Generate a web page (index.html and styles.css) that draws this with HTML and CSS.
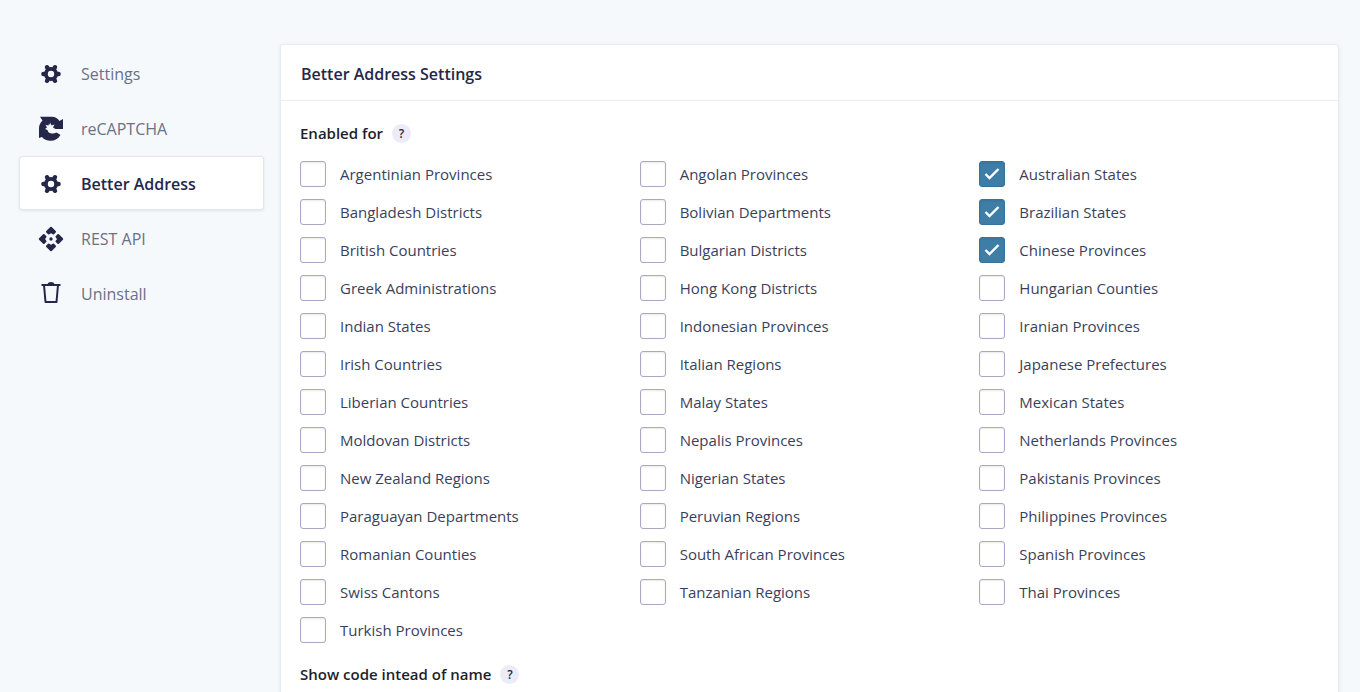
FILE: index.html
```
<!DOCTYPE html>
<html lang="en">
<head>
    <meta charset="UTF-8">
    <meta name="viewport" content="width=device-width, initial-scale=1.0">
    <title>Better Address Settings</title>
    <link rel="stylesheet" href="styles.css">
</head>
<body>
    <div class="page">
        <nav class="sidebar">
            <a href="#settings">
                <svg class="icon" viewBox="0 0 26 26"><use href="#gear" /></svg>
                <span>Settings</span>
            </a>
            <a href="#recaptcha">
                <svg class="icon" viewBox="0 0 26 26">
                    <path fill="currentColor" d="M2 0.800H14Q19 1 21.500 5L25 3V13H14V16H18L22.500 19Q19 24.800 12.500 24.800Q7 24.800 4 21L1 22V12Q1 8 4.500 4.500Z" />
                    <path fill="#f6f9fc" d="M12.500 6.500L13.500 9.500L16.500 8.500L15 11.500L17.500 13H25V16.500H18.500Q16.500 17.800 13.500 17.500Q10 17 9.500 14L7 13L9 11.500L7.500 9L10.500 9.500L11 7.500L12 9Z" />
                </svg>
                <span>reCAPTCHA</span>
            </a>
            <a href="#address" class="active">
                <svg class="icon" viewBox="0 0 26 26"><use href="#gear" /></svg>
                <span>Better Address</span>
            </a>
            <a href="#rest">
                <svg class="icon" viewBox="0 0 26 26">
                    <g fill="currentColor">
                        <path id="api-arrow" d="M13 1.800L17 5.800L15.300 7.500L13 5.900L10.700 7.500L9 5.800Z" stroke="currentColor" stroke-width="2" stroke-linejoin="round" />
                        <use href="#api-arrow" transform="rotate(90 13 13)" />
                        <use href="#api-arrow" transform="rotate(180 13 13)" />
                        <use href="#api-arrow" transform="rotate(270 13 13)" />
                        <circle cx="13" cy="13" r="1.700" />
                    </g>
                </svg>
                <span>REST API</span>
            </a>
            <a href="#uninstall">
                <svg class="icon" viewBox="0 0 26 26">
                    <path fill="none" stroke="currentColor" stroke-width="2" stroke-linejoin="round" d="M3.500 4H22.500M6 4L7.500 21H18.500L20 4" />
                    <path fill="currentColor" d="M9.500 3Q10 1 13 1Q16 1 16.500 3V4H9.500Z" />
                </svg>
                <span>Uninstall</span>
            </a>
        </nav>

        <main class="card">
            <h1>Better Address Settings</h1>
            <form class="fields">
                <h2>Enabled for <button type="button" class="help" aria-label="Help for enabled states">?</button></h2>
                <div class="choices">
                    <label><input type="checkbox"> Argentinian Provinces</label>
                    <label><input type="checkbox"> Angolan Provinces</label>
                    <label><input type="checkbox" checked> Australian States</label>
                    <label><input type="checkbox"> Bangladesh Districts</label>
                    <label><input type="checkbox"> Bolivian Departments</label>
                    <label><input type="checkbox" checked> Brazilian States</label>
                    <label><input type="checkbox"> British Countries</label>
                    <label><input type="checkbox"> Bulgarian Districts</label>
                    <label><input type="checkbox" checked> Chinese Provinces</label>
                    <label><input type="checkbox"> Greek Administrations</label>
                    <label><input type="checkbox"> Hong Kong Districts</label>
                    <label><input type="checkbox"> Hungarian Counties</label>
                    <label><input type="checkbox"> Indian States</label>
                    <label><input type="checkbox"> Indonesian Provinces</label>
                    <label><input type="checkbox"> Iranian Provinces</label>
                    <label><input type="checkbox"> Irish Countries</label>
                    <label><input type="checkbox"> Italian Regions</label>
                    <label><input type="checkbox"> Japanese Prefectures</label>
                    <label><input type="checkbox"> Liberian Countries</label>
                    <label><input type="checkbox"> Malay States</label>
                    <label><input type="checkbox"> Mexican States</label>
                    <label><input type="checkbox"> Moldovan Districts</label>
                    <label><input type="checkbox"> Nepalis Provinces</label>
                    <label><input type="checkbox"> Netherlands Provinces</label>
                    <label><input type="checkbox"> New Zealand Regions</label>
                    <label><input type="checkbox"> Nigerian States</label>
                    <label><input type="checkbox"> Pakistanis Provinces</label>
                    <label><input type="checkbox"> Paraguayan Departments</label>
                    <label><input type="checkbox"> Peruvian Regions</label>
                    <label><input type="checkbox"> Philippines Provinces</label>
                    <label><input type="checkbox"> Romanian Counties</label>
                    <label><input type="checkbox"> South African Provinces</label>
                    <label><input type="checkbox"> Spanish Provinces</label>
                    <label><input type="checkbox"> Swiss Cantons</label>
                    <label><input type="checkbox"> Tanzanian Regions</label>
                    <label><input type="checkbox"> Thai Provinces</label>
                    <label><input type="checkbox"> Turkish Provinces</label>
                </div>
                <h2>Show code intead of name <button type="button" class="help" aria-label="Help for showing codes">?</button></h2>
            </form>
        </main>
    </div>

    <!-- Shared icon -->
    <svg width="0" height="0" class="symbols">
        <symbol id="gear" viewBox="0 0 26 26">
            <g fill="none" stroke="currentColor">
                <circle cx="13" cy="13" r="5.100" stroke-width="3.800" />
                <path stroke-width="4.400" stroke-linecap="round" d="M5.400 13H6.400M19.600 13H20.600M9 6.200L9.500 7M16.500 19L17 19.800M17 6.200L16.500 7M9.500 19L9 19.800" />
            </g>
        </symbol>
    </svg>
</body>
</html>
```
FILE: styles.css
```
* {
    box-sizing: border-box;
}
body {
    margin: 0;
    background: #f6f9fc;
    color: #3a3f5c;
    font-family: "Segoe UI", "Open Sans", "Noto Sans", sans-serif;
    font-size: 15px;
}
.page {
    display: flex;
    align-items: flex-start;
    gap: 16px;
    padding: 44px 21px 20px 19px;
}
.sidebar {
    display: flex;
    flex-direction: column;
    flex: 0 0 245px;
    gap: 1px;
    padding-top: 2px;
}
.sidebar a {
    display: flex;
    align-items: center;
    gap: 17px;
    height: 54px;
    padding: 2px 18px 0;
    border: 1px solid transparent;
    border-radius: 3px;
    color: #6b7087;
    font-size: 16px;
    text-decoration: none;
}
.sidebar a.active {
    background: #fff;
    border-color: #e3e6f0;
    box-shadow: 0 1px 3px rgba(30, 40, 90, 0.1);
    color: #242748;
    font-weight: 550;
}
.icon {
    width: 26px;
    height: 26px;
    color: #242748;
}
.card {
    flex: 1;
    background: #fff;
    border: 1px solid #e6eaf2;
    border-radius: 3px;
    box-shadow: 0 1px 4px rgba(30, 40, 90, 0.08);
}
h1 {
    margin: 0;
    padding: 17px 20px 14px;
    border-bottom: 1px solid #ecedf1;
    color: #242748;
    font-size: 16px;
    font-weight: 550;
    line-height: 24px;
}
.fields {
    padding: 20px 19px;
}
h2 {
    display: flex;
    align-items: center;
    gap: 9px;
    margin: 0;
    color: #1d1f2b;
    font-size: 15px;
    font-weight: 550;
    line-height: 24px;
}
.help {
    width: 19px;
    height: 19px;
    padding: 0;
    border: none;
    border-radius: 50%;
    background: #ecebf8;
    color: #242748;
    font-family: inherit;
    font-size: 12px;
    font-weight: 600;
    line-height: 19px;
    cursor: pointer;
}
.choices {
    display: grid;
    grid-template-columns: repeat(3, 1fr);
    gap: 12px 0;
    margin: 16px 0 19px;
}
.choices label {
    display: flex;
    align-items: center;
    gap: 14px;
    height: 26px;
}
.choices input {
    appearance: none;
    width: 26px;
    height: 26px;
    margin: 0;
    border: 1px solid #a9a8c5;
    border-radius: 3px;
    background: #fff;
    box-shadow: inset 0 1px 2px rgba(30, 30, 80, 0.1);
}
.choices input:checked {
    border-color: #36749d;
    background: #3e7da6 url("data:image/svg+xml,%3Csvg xmlns='http://www.w3.org/2000/svg' viewBox='0 0 24 24'%3E%3Cpath d='M5.500 12L9.500 16L18.500 7' fill='none' stroke='white' stroke-width='2.400'/%3E%3C/svg%3E") center / 24px no-repeat;
}
.symbols {
    position: absolute;
}
```
